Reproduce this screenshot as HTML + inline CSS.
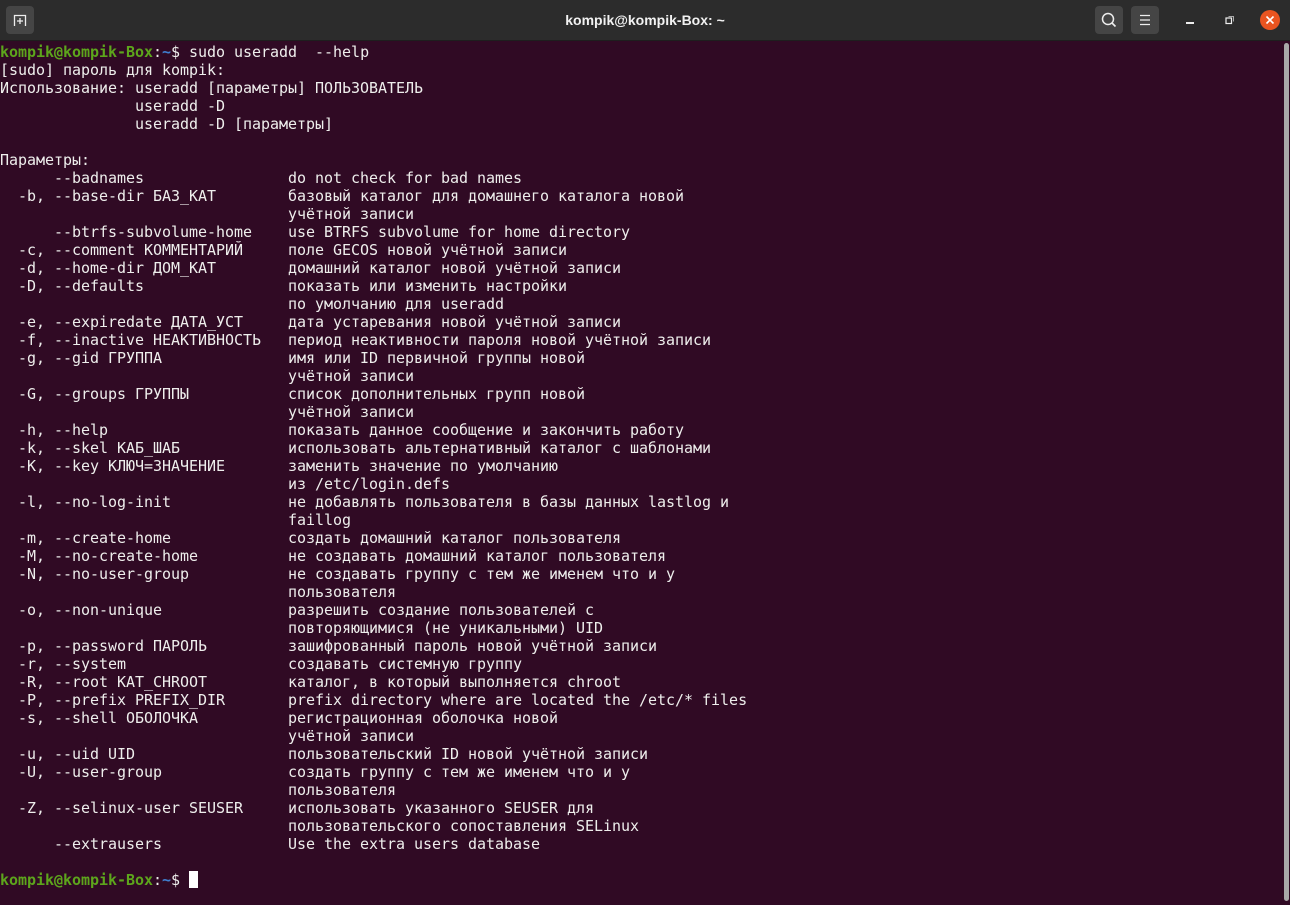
<!DOCTYPE html>
<html><head><meta charset="utf-8">
<style>
html,body{margin:0;padding:0;width:1290px;height:905px;overflow:hidden;background:#300a24;}
.tb{position:absolute;left:0;top:0;width:1290px;height:40px;background:#2c2c2c;border-bottom:1px solid #1e1e1e;}
.btn{position:absolute;top:6px;width:28px;height:28px;background:#454545;border-radius:4px;}
.title{position:absolute;top:0;left:0;width:1290px;text-align:center;color:#f2f2f2;font:bold 14px "Liberation Sans",sans-serif;line-height:40px;}
.close{position:absolute;left:1260px;top:10px;width:20px;height:20px;border-radius:50%;background:#e95420;}
pre{position:absolute;left:0;top:43px;margin:0;font:15px/18px "DejaVu Sans Mono","Liberation Mono",monospace;color:#eeeeec;letter-spacing:-0.03px;}
.g{color:#5da51c;font-weight:bold}
.b{color:#3f7fd0;font-weight:bold}
.cur{display:inline-block;width:9px;height:17px;background:#fff;vertical-align:-3px;}
.sb{position:absolute;left:1284px;top:43px;width:5px;height:858px;background:#a9a9a9;border-radius:3px;}
</style></head><body>
<div class="tb">
 <div class="btn" style="left:6px;"><svg width="28" height="28" viewBox="0 0 28 28"><path d="M8.5 20V9.5h11V20" fill="none" stroke="#eee" stroke-width="1.3"/><path d="M14 12v6M11 15h6" stroke="#eee" stroke-width="1.3"/></svg></div>
 <div class="title">kompik@kompik-Box: ~</div>
 <div class="btn" style="left:1095px;"><svg width="28" height="28" viewBox="0 0 28 28"><circle cx="13" cy="13" r="5.5" fill="none" stroke="#eee" stroke-width="1.5"/><path d="M17 17l3.5 3.5" stroke="#eee" stroke-width="1.6"/></svg></div>
 <div class="btn" style="left:1131px;"><svg width="28" height="28" viewBox="0 0 28 28"><path d="M9 9.5h10M9 14h10M9 18.5h10" stroke="#eee" stroke-width="1.3"/></svg></div>
 <div style="position:absolute;left:1186px;top:22px;width:8px;height:1.5px;background:#eee"></div>
 <svg style="position:absolute;left:1225px;top:15px" width="10" height="10" viewBox="0 0 10 10"><rect x="1" y="3" width="5.5" height="5.5" fill="none" stroke="#eee" stroke-width="1.2"/><path d="M3.5 1.5h5v5" fill="none" stroke="#aaa" stroke-width="1"/></svg>
 <div class="close"><svg width="20" height="20" viewBox="0 0 20 20"><path d="M6.5 6.5l7 7M13.5 6.5l-7 7" stroke="#fff" stroke-width="1.6"/></svg></div>
</div>
<pre><span class="g">kompik@kompik-Box</span>:<span class="b">~</span>$ sudo useradd  --help
[sudo] пароль для kompik:
Использование: useradd [параметры] ПОЛЬЗОВАТЕЛЬ
               useradd -D
               useradd -D [параметры]

Параметры:
      --badnames                do not check for bad names
  -b, --base-dir БАЗ_КАТ        базовый каталог для домашнего каталога новой
                                учётной записи
      --btrfs-subvolume-home    use BTRFS subvolume for home directory
  -c, --comment КОММЕНТАРИЙ     поле GECOS новой учётной записи
  -d, --home-dir ДОМ_КАТ        домашний каталог новой учётной записи
  -D, --defaults                показать или изменить настройки
                                по умолчанию для useradd
  -e, --expiredate ДАТА_УСТ     дата устаревания новой учётной записи
  -f, --inactive НЕАКТИВНОСТЬ   период неактивности пароля новой учётной записи
  -g, --gid ГРУППА              имя или ID первичной группы новой
                                учётной записи
  -G, --groups ГРУППЫ           список дополнительных групп новой
                                учётной записи
  -h, --help                    показать данное сообщение и закончить работу
  -k, --skel КАБ_ШАБ            использовать альтернативный каталог с шаблонами
  -K, --key КЛЮЧ=ЗНАЧЕНИЕ       заменить значение по умолчанию
                                из /etc/login.defs
  -l, --no-log-init             не добавлять пользователя в базы данных lastlog и
                                faillog
  -m, --create-home             создать домашний каталог пользователя
  -M, --no-create-home          не создавать домашний каталог пользователя
  -N, --no-user-group           не создавать группу с тем же именем что и у
                                пользователя
  -o, --non-unique              разрешить создание пользователей с
                                повторяющимися (не уникальными) UID
  -p, --password ПАРОЛЬ         зашифрованный пароль новой учётной записи
  -r, --system                  создавать системную группу
  -R, --root КАТ_CHROOT         каталог, в который выполняется chroot
  -P, --prefix PREFIX_DIR       prefix directory where are located the /etc/* files
  -s, --shell ОБОЛОЧКА          регистрационная оболочка новой
                                учётной записи
  -u, --uid UID                 пользовательский ID новой учётной записи
  -U, --user-group              создать группу с тем же именем что и у
                                пользователя
  -Z, --selinux-user SEUSER     использовать указанного SEUSER для
                                пользовательского сопоставления SELinux
      --extrausers              Use the extra users database

<span class="g">kompik@kompik-Box</span>:<span class="b">~</span>$ <span class="cur"></span></pre>
<div class="sb"></div>
</body></html>
